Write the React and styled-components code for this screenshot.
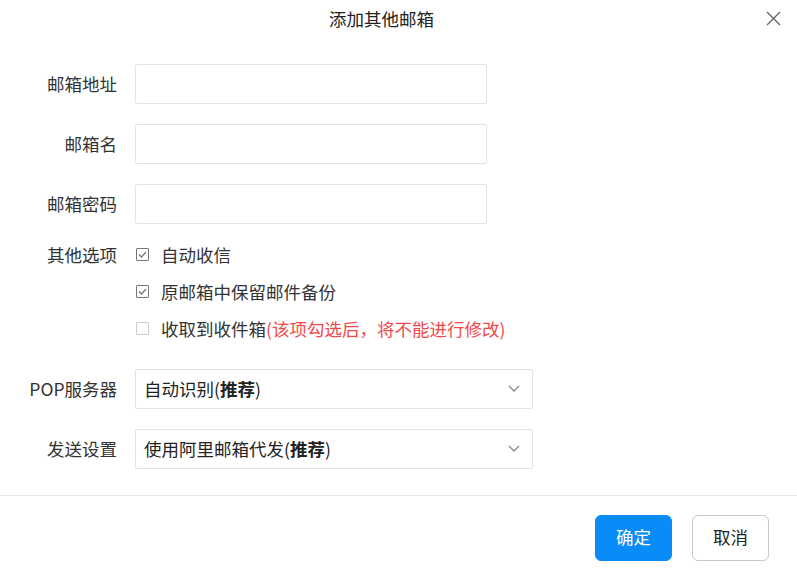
import React from 'react';
import styled, { createGlobalStyle } from 'styled-components';

const Global = createGlobalStyle`
  html, body { margin: 0; padding: 0; background: #fff; }
  body {
    font-family: "Microsoft YaHei", "Noto Sans CJK SC", "Noto Sans", sans-serif;
    color: #333;
  }
`;

const Dialog = styled.div`
  width: 797px;
  height: 579px;
  display: flex;
  flex-direction: column;
  background: #fff;
`;

const Header = styled.div`
  position: relative;
  height: 36px;
  display: flex;
  align-items: center;
  justify-content: center;
  padding-right: 34px;
  font-size: 17.5px;
  color: #222;
`;

const Close = styled.button`
  position: absolute;
  right: 16px;
  top: 11px;
  width: 15px;
  height: 15px;
  padding: 0;
  border: none;
  background: none;
  cursor: pointer;
  display: flex;
`;

const Form = styled.div`
  flex: 1;
  display: flex;
  flex-direction: column;
  padding-top: 28px;
`;

const Row = styled.div`
  display: grid;
  grid-template-columns: 117px 1fr;
  column-gap: 18px;
  margin-top: ${p => p.$top || 0}px;
`;

const Label = styled.div`
  text-align: right;
  font-size: 17.5px;
  line-height: ${p => p.$lh || 39}px;
  color: #333;
  white-space: nowrap;
`;

const Input = styled.input`
  box-sizing: border-box;
  width: ${p => p.$w || 352}px;
  height: 40px;
  border: 1px solid #e3e3e3;
  border-radius: 2px;
  outline: none;
  padding: 0 8px;
  font-size: 16px;
  font-family: inherit;
`;

const Options = styled.div`
  display: flex;
  flex-direction: column;
`;

const Option = styled.label`
  display: flex;
  align-items: center;
  height: 37px;
  font-size: 17.5px;
  color: #333;
  white-space: nowrap;
`;

const Box = styled.span`
  box-sizing: border-box;
  width: 13px;
  height: 13px;
  margin-left: 1px;
  margin-right: 12px;
  border: 1px solid ${p => (p.$checked ? '#777' : '#ccc')};
  border-radius: 1px;
  display: flex;
  align-items: center;
  justify-content: center;
  background: #fff;
`;

const Note = styled.span`
  color: #f24a4a;
`;

const Select = styled.div`
  box-sizing: border-box;
  width: 398px;
  height: 40px;
  border: 1px solid #e3e3e3;
  border-radius: 2px;
  display: flex;
  align-items: center;
  justify-content: space-between;
  padding: 0 12px 1px 8px;
  font-size: 17.5px;
  color: #222;
  b { font-weight: 700; }
`;

const Footer = styled.div`
  border-top: 1px solid #e6e6e6;
  height: 84px;
  box-sizing: border-box;
  display: flex;
  justify-content: flex-end;
  align-items: flex-start;
  gap: 20px;
  padding: 19px 28px 0 0;
`;

const Button = styled.button`
  box-sizing: border-box;
  width: 77px;
  height: 46px;
  padding: 0 0 4px;
  border-radius: 6px;
  font-size: 17.5px;
  font-family: inherit;
  cursor: pointer;
  border: 1px solid ${p => (p.$primary ? '#0a8cf8' : '#c8c8c8')};
  background: ${p => (p.$primary ? '#0a8cf8' : '#fff')};
  color: ${p => (p.$primary ? '#fff' : '#222')};
`;

function Check({ checked }) {
  return (
    <Box $checked={checked}>
      {checked && (
        <svg width="9" height="7" viewBox="0 0 9 7">
          <path d="M1 3.5 L3.5 6 L8 1" fill="none" stroke="#777" strokeWidth="1.3" />
        </svg>
      )}
    </Box>
  );
}

function Chevron() {
  return (
    <svg width="12" height="7" viewBox="0 0 12 7">
      <path d="M1 1 L6 6 L11 1" fill="none" stroke="#888" strokeWidth="1.3" />
    </svg>
  );
}

export default function App() {
  return (
    <>
      <Global />
      <Dialog>
        <Header>
          添加其他邮箱
          <Close aria-label="关闭">
            <svg width="15" height="15" viewBox="0 0 15 15">
              <path d="M1 1 L14 14 M14 1 L1 14" stroke="#666" strokeWidth="1.4" />
            </svg>
          </Close>
        </Header>
        <Form>
          <Row>
            <Label>邮箱地址</Label>
            <Input />
          </Row>
          <Row $top={20}>
            <Label>邮箱名</Label>
            <Input />
          </Row>
          <Row $top={20}>
            <Label>邮箱密码</Label>
            <Input type="password" />
          </Row>
          <Row $top={12}>
            <Label $lh={37}>其他选项</Label>
            <Options>
              <Option><Check checked />自动收信</Option>
              <Option><Check checked />原邮箱中保留邮件备份</Option>
              <Option><Check />收取到收件箱<Note>(该项勾选后，将不能进行修改)</Note></Option>
            </Options>
          </Row>
          <Row $top={22}>
            <Label>POP服务器</Label>
            <Select>
              <span>自动识别(<b>推荐</b>)</span>
              <Chevron />
            </Select>
          </Row>
          <Row $top={20}>
            <Label>发送设置</Label>
            <Select>
              <span>使用阿里邮箱代发(<b>推荐</b>)</span>
              <Chevron />
            </Select>
          </Row>
        </Form>
        <Footer>
          <Button $primary>确定</Button>
          <Button>取消</Button>
        </Footer>
      </Dialog>
    </>
  );
}
